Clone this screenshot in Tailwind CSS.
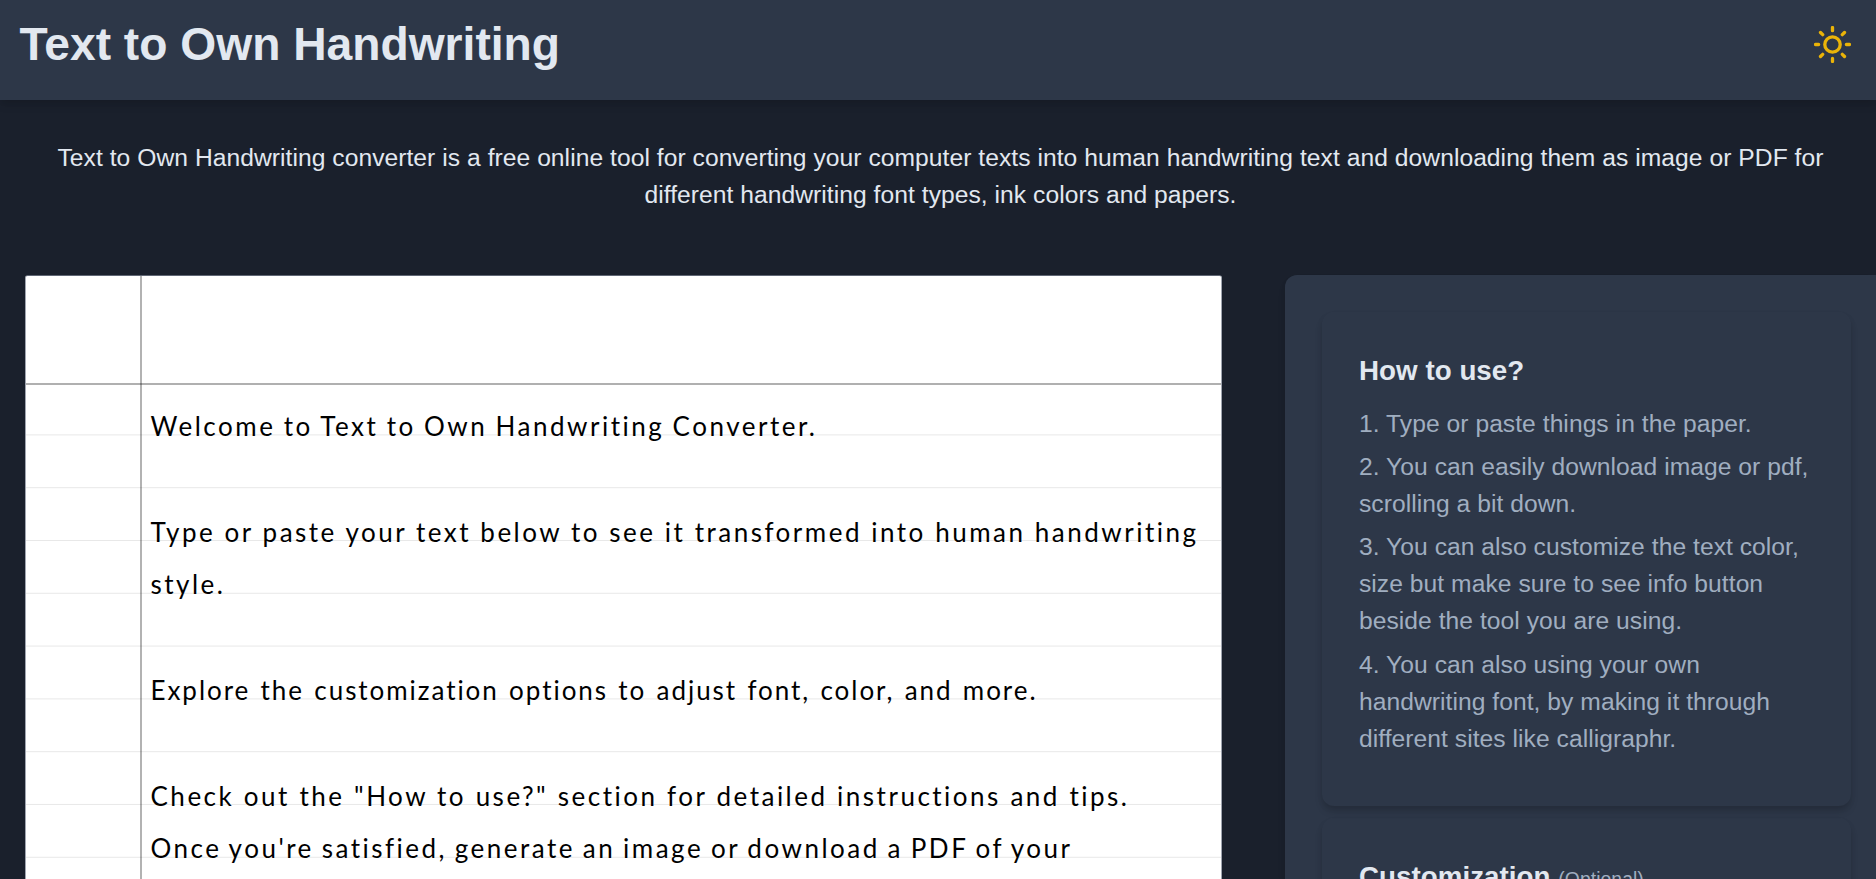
<!DOCTYPE html>
<html lang="en">
<head>
<meta charset="utf-8">
<title>Text to Own Handwriting</title>
<script src="https://cdn.jsdelivr.net/npm/@tailwindcss/browser@4"></script>
</head>
<body class="flex h-[879px] flex-col overflow-hidden bg-[#1a202c] font-['Liberation_Sans',Arial,sans-serif] text-[24.64px] leading-[37px] tracking-[0.045px] text-[#e2e8f0]">
<header class="relative flex h-[100px] shrink-0 items-start justify-between bg-[#2d3748] pt-[17px] pr-[25px] pl-[19.5px] shadow-[0_6px_9px_-1px_rgba(0,0,0,0.1),0_3px_6px_-1px_rgba(0,0,0,0.06)]">
  <h1 class="text-[46.2px] leading-[55px] font-bold tracking-normal whitespace-nowrap">Text to Own Handwriting</h1>
  <svg class="mt-[9px] size-[37px] text-[#eab308]" viewBox="0 0 24 24" fill="none" stroke="currentColor" stroke-width="2.15" stroke-linecap="round" stroke-linejoin="round"><circle cx="12" cy="12" r="5"/><path d="M12 1v2M12 21v2M4.22 4.22l1.42 1.42M18.36 18.36l1.42 1.42M1 12h2M21 12h2M4.22 19.78l1.42-1.42M18.36 5.64l1.42-1.42"/></svg>
</header>
<p class="mt-[39px] ml-[5px] text-center whitespace-nowrap">Text to Own Handwriting converter is a free online tool for converting your computer texts into human handwriting text and downloading them as image or PDF for<br>different handwriting font types, ink colors and papers.</p>
<main class="mt-[42px] flex min-h-0 flex-1 items-stretch justify-between overflow-hidden pt-[20px] pl-[25px]">
  <section class="relative w-[1197px] overflow-hidden rounded-t-[3px] border border-b-0 border-[#a0a5b0] border-t-[#5f6674] bg-white bg-[linear-gradient(transparent_51.4px,#e8e8e8_51.4px,#e8e8e8_52.8px)] bg-[length:100%_52.8px] bg-[position:0_106.6px]">
    <div class="relative h-[109px] border-b-2 border-[#b0b0b0] bg-white"></div>
    <div class="absolute top-0 left-[114px] h-full w-[2px] bg-black/30"></div>
    <div class="relative pt-[15px] pl-[124.5px] font-[Lato,sans-serif] text-[26px] leading-[52.8px] tracking-[2.5px] [word-spacing:-6px] whitespace-nowrap text-black">
      <p class="w-[667px] [text-align-last:justify]">Welcome to Text to Own Handwriting Converter.</p>
      <p class="mt-[52.8px] w-[1048px] [text-align-last:justify]">Type or paste your text below to see it transformed into human handwriting</p>
      <p>style.</p>
      <p class="mt-[52.8px] w-[887px] tracking-[1.95px] [text-align-last:justify]">Explore the customization options to adjust font, color, and more.</p>
      <p class="mt-[52.8px] w-[979px] [text-align-last:justify]">Check out the "How to use?" section for detailed instructions and tips.</p>
      <p class="w-[922px] [text-align-last:justify]">Once you're satisfied, generate an image or download a PDF of your</p>
    </div>
  </section>
  <aside class="flex w-[591px] flex-col gap-[12px] rounded-tl-xl bg-[#2d3748] pt-[37px] pr-[25px] pl-[37px] shadow-[0_6px_9px_-1px_rgba(0,0,0,0.1),0_3px_6px_-1px_rgba(0,0,0,0.06)]">
    <section class="h-[494px] shrink-0 rounded-xl p-[37px] shadow-[0_6px_9px_-1px_rgba(0,0,0,0.14),0_3px_6px_-1px_rgba(0,0,0,0.1)]">
      <h2 class="text-[27.72px] leading-[43px] font-bold">How to use?</h2>
      <ol class="mt-[13px] flex flex-col gap-[6.2px] whitespace-nowrap text-[#a0aec0]">
        <li>1. Type or paste things in the paper.</li>
        <li>2. You can easily download image or pdf,<br>scrolling a bit down.</li>
        <li>3. You can also customize the text color,<br>size but make sure to see info button<br>beside the tool you are using.</li>
        <li>4. You can also using your own<br>handwriting font, by making it through<br>different sites like calligraphr.</li>
      </ol>
    </section>
    <section class="h-[494px] shrink-0 rounded-xl p-[37px] shadow-[0_6px_9px_-1px_rgba(0,0,0,0.14),0_3px_6px_-1px_rgba(0,0,0,0.1)]">
      <h2 class="text-[27.72px] leading-[43px] font-bold">Customization <span class="text-[19.4px] font-normal text-[#a0aec0]">(Optional)</span></h2>
    </section>
  </aside>
</main>
</body>
</html>
